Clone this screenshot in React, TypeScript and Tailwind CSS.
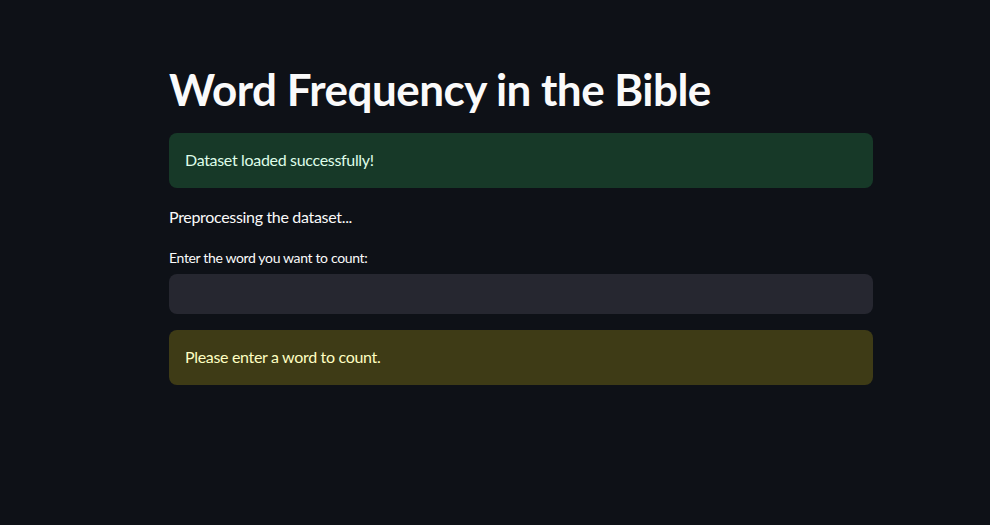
const App = () => {
  return (
    <div className="min-h-[525px] w-full bg-[#0e1117] text-[#fafafa]" style={{ fontFamily: 'Lato, "Noto Sans", sans-serif' }}>
      <main className="ml-[169px] w-[704px] pt-[63px]">
        <h1 className="text-[44px] font-bold leading-[1.2] tracking-[-0.012em]">Word Frequency in the Bible</h1>
        <div className="mt-[17px] flex h-[55px] items-center rounded-lg bg-[#173928] px-4 text-base tracking-[-0.02em] text-[#dffde9]">
          Dataset loaded successfully!
        </div>
        <p className="mt-[17px] text-base leading-[24px] tracking-[-0.02em]">Preprocessing the dataset...</p>
        <label className="mt-[19px] block text-sm leading-[20px] tracking-[-0.025em]">Enter the word you want to count:</label>
        <input
          type="text"
          className="mt-[6px] block h-[40px] w-full rounded-lg bg-[#262730] px-3 text-base outline-none"
        />
        <div className="mt-[16px] flex h-[55px] items-center rounded-lg bg-[#3e3b16] px-4 text-base tracking-[-0.02em] text-[#ffffc2]">
          Please enter a word to count.
        </div>
      </main>
    </div>
  );
};

export default App;
